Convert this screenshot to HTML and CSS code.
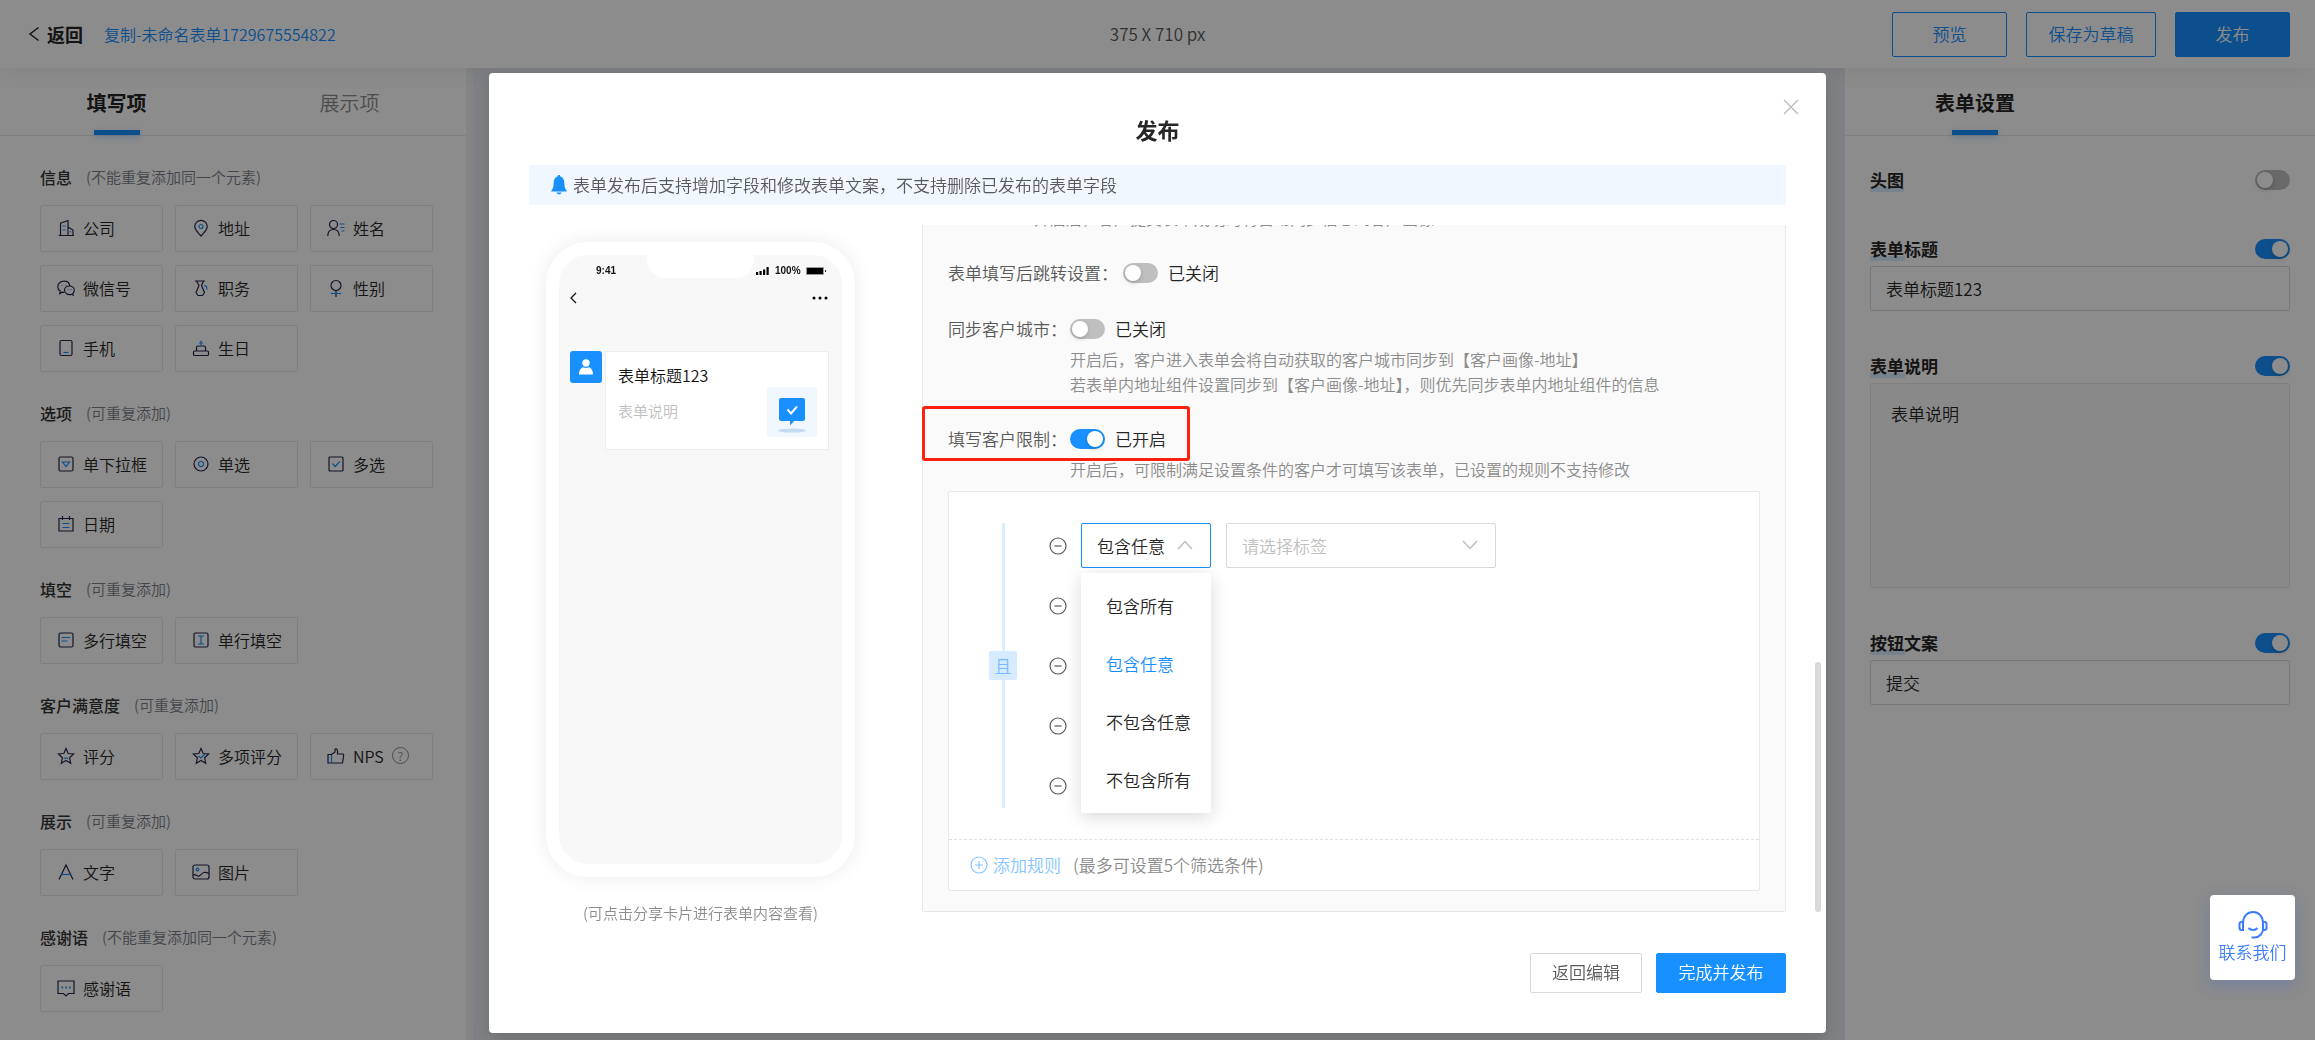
FILE: index.html
```html
<!DOCTYPE html>
<html lang="zh-CN">
<head>
<meta charset="utf-8">
<meta name="viewport" content="width=device-width, initial-scale=1">
<title>表单编辑 - 发布</title>
<link rel="stylesheet" href="styles.css">
</head>
<body>
<svg class="sprite" aria-hidden="true">
  <symbol id="i-company" viewBox="0 0 18 18"><path d="M3.5 16.5V4.2L11 1.5v15M1.5 16.5h15.500M11 8l5 3v5.500"/><path class="b" d="M5.500 7h3M5.500 11h3M13.500 12v1.500"/></symbol>
  <symbol id="i-place" viewBox="0 0 18 18"><path d="M9 17C5 13 2.800 10.500 2.800 7.500a6.200 6.200 0 0 1 12.400 0C15.200 10.500 13 13 9 17z"/><circle class="b" cx="9" cy="7.500" r="2"/></symbol>
  <symbol id="i-name" viewBox="0 0 18 18"><circle cx="6.500" cy="5.500" r="4"/><path d="M.8 17c0-4 2-6.500 5.700-6.500s5.700 2.500 5.700 6.500"/><path class="b" d="M12.500 5h5M13.500 8.500h4M14.500 12h3"/></symbol>
  <symbol id="i-wechat" viewBox="0 0 18 18"><path d="M12.800 7C12.500 4 10 2.200 7 2.200 3.600 2.200.8 4.500.8 7.700c0 1.900.9 3.400 2.400 4.400L2.700 14.600l2.700-1.400 2 .2"/><path d="M12.400 7c2.800 0 4.900 1.900 4.900 4.300 0 1.300-.6 2.400-1.500 3.200l.3 1.600-1.700-.8c-3.800.9-6.900-1.200-6.900-4C7.500 8.900 9.700 7 12.400 7z"/><path class="b" d="M4.500 6.500h1M8.500 6.500h1M10.500 10.500h1M13.500 10.500h1"/></symbol>
  <symbol id="i-job" viewBox="0 0 18 18"><path d="M3 2h10M4.500 2 7 6.500 4 13.500 6 16.500h4.500l2-3L9.500 6.500 11.500 2"/><path class="b" d="M12 6.500l2.500 1 .5 3"/></symbol>
  <symbol id="i-sex" viewBox="0 0 18 18"><circle cx="9" cy="6.500" r="5"/><path d="M9 11.500V18"/><path class="b" d="M4 14.500h10"/></symbol>
  <symbol id="i-phone" viewBox="0 0 18 18"><rect x="3" y="1.500" width="12" height="15" rx="1.500"/><path class="b" d="M6.500 13.500h5"/></symbol>
  <symbol id="i-cake" viewBox="0 0 18 18"><rect x="1.500" y="12" width="15" height="4.500" rx="1"/><path d="M4.500 12V8.500a1.500 1.500 0 0 1 1.500-1.500h6a1.500 1.500 0 0 1 1.500 1.500V12"/><path class="b" d="M9 1.500V7M7 4h4"/></symbol>
  <symbol id="i-select" viewBox="0 0 18 18"><rect x="2" y="2" width="14" height="14" rx="1.500"/><path class="b" d="M5.500 7h7L9 11.500z"/></symbol>
  <symbol id="i-radio" viewBox="0 0 18 18"><circle cx="9" cy="9" r="7"/><circle class="b" cx="9" cy="9" r="2.500"/></symbol>
  <symbol id="i-check" viewBox="0 0 18 18"><rect x="2" y="2" width="14" height="14" rx="1"/><path class="b" d="M5.500 8.500 8.300 11.500 12.800 6.500"/></symbol>
  <symbol id="i-date" viewBox="0 0 18 18"><path d="M2 3.500h14V16H2zM5.500 1v4M12.500 1v4"/><path class="b" d="M5.500 8.500h7M5.500 12.500h7"/></symbol>
  <symbol id="i-multi" viewBox="0 0 18 18"><rect x="2" y="2" width="14" height="14" rx="1.500"/><path class="b" d="M4.500 6.500h9M4.500 10h6"/></symbol>
  <symbol id="i-single" viewBox="0 0 18 18"><rect x="2" y="2" width="14" height="14" rx="1.500"/><path class="b" d="M6 5h6M9 5v8M6 13h6"/></symbol>
  <symbol id="i-star" viewBox="0 0 18 18"><path d="M9 1.500l2.200 5 5.400.5-4 3.700 1.100 5.500L9 13.500l-4.700 2.700 1.100-5.500L1.400 7l5.400-.5z"/><path class="b" d="M6.800 11.200h4.400"/></symbol>
  <symbol id="i-stars" viewBox="0 0 18 18"><path d="M9 1.500l2.200 5 5.400.5-4 3.700 1.100 5.500L9 13.500l-4.700 2.700 1.100-5.500L1.400 7l5.400-.5z"/><path class="b" d="M6.500 9l2.300 2L13.500 6.500"/></symbol>
  <symbol id="i-like" viewBox="0 0 18 18"><path d="M1 7.500h3.500L8 5V2.500C8 1.500 10.500 1.500 10.500 4v3h5.500l.7 1-1.200 8H1z"/><path class="b" d="M4.500 8v8"/></symbol>
  <symbol id="i-text" viewBox="0 0 18 18"><path d="M2 16.500 9 2l7 14.500"/><path class="b" d="M4.500 11.500h9"/></symbol>
  <symbol id="i-image" viewBox="0 0 18 18"><rect x="1" y="2" width="16" height="14" rx="2"/><path d="M1 12c3-2 4.500 3 7 .5s4-4.500 9-2"/><circle class="b" cx="5.500" cy="6.500" r="1.300"/></symbol>
  <symbol id="i-thanks" viewBox="0 0 18 18"><path d="M1 2h16v12.500h-5.500L9 17l-2.500-2.500H1z"/><path class="b w" d="M4.500 8.500h1.500M8.300 8.500h1.500M12 8.500h1.500"/></symbol>
  <symbol id="i-minus" viewBox="0 0 18 18"><circle cx="9" cy="9" r="8"/><path d="M5.500 9h7"/></symbol>
  <symbol id="i-plus" viewBox="0 0 18 18"><circle cx="9" cy="9" r="8"/><path d="M5 9h8M9 5v8"/></symbol>
</svg>

<header class="topbar">
  <button class="back" type="button">
    <svg width="12" height="16" viewBox="0 0 12 16"><path d="M10.500 1.500 2 8l8.500 6.500"/></svg>返回
  </button>
  <a class="form-name" href="#">复制-未命名表单1729675554822</a>
  <p class="size">375 X 710 px</p>
  <div class="actions">
    <button class="btn outline" type="button">预览</button>
    <button class="btn outline wide" type="button">保存为草稿</button>
    <button class="btn solid" type="button">发布</button>
  </div>
</header>

<main class="editor">
  <aside class="library">
    <nav class="tabs">
      <a class="tab active" href="#">填写项</a>
      <a class="tab" href="#">展示项</a>
    </nav>
    <div class="groups">
      <section class="group">
        <h2>信息 <small>(不能重复添加同一个元素)</small></h2>
        <div class="tiles">
          <button class="tile" type="button"><svg><use href="#i-company"/></svg>公司</button>
          <button class="tile" type="button"><svg><use href="#i-place"/></svg>地址</button>
          <button class="tile" type="button"><svg><use href="#i-name"/></svg>姓名</button>
          <button class="tile" type="button"><svg><use href="#i-wechat"/></svg>微信号</button>
          <button class="tile" type="button"><svg><use href="#i-job"/></svg>职务</button>
          <button class="tile" type="button"><svg><use href="#i-sex"/></svg>性别</button>
          <button class="tile" type="button"><svg><use href="#i-phone"/></svg>手机</button>
          <button class="tile" type="button"><svg><use href="#i-cake"/></svg>生日</button>
        </div>
      </section>
      <section class="group">
        <h2>选项 <small>(可重复添加)</small></h2>
        <div class="tiles">
          <button class="tile" type="button"><svg><use href="#i-select"/></svg>单下拉框</button>
          <button class="tile" type="button"><svg><use href="#i-radio"/></svg>单选</button>
          <button class="tile" type="button"><svg><use href="#i-check"/></svg>多选</button>
          <button class="tile" type="button"><svg><use href="#i-date"/></svg>日期</button>
        </div>
      </section>
      <section class="group">
        <h2>填空 <small>(可重复添加)</small></h2>
        <div class="tiles">
          <button class="tile" type="button"><svg><use href="#i-multi"/></svg>多行填空</button>
          <button class="tile" type="button"><svg><use href="#i-single"/></svg>单行填空</button>
        </div>
      </section>
      <section class="group">
        <h2>客户满意度 <small>(可重复添加)</small></h2>
        <div class="tiles">
          <button class="tile" type="button"><svg><use href="#i-star"/></svg>评分</button>
          <button class="tile" type="button"><svg><use href="#i-stars"/></svg>多项评分</button>
          <button class="tile" type="button"><svg><use href="#i-like"/></svg>NPS <span class="help">?</span></button>
        </div>
      </section>
      <section class="group">
        <h2>展示 <small>(可重复添加)</small></h2>
        <div class="tiles">
          <button class="tile" type="button"><svg><use href="#i-text"/></svg>文字</button>
          <button class="tile" type="button"><svg><use href="#i-image"/></svg>图片</button>
        </div>
      </section>
      <section class="group">
        <h2>感谢语 <small>(不能重复添加同一个元素)</small></h2>
        <div class="tiles">
          <button class="tile" type="button"><svg><use href="#i-thanks"/></svg>感谢语</button>
        </div>
      </section>
    </div>
  </aside>
  <div class="canvas"></div>
  <aside class="settings">
    <nav class="tabs"><a class="tab active" href="#">表单设置</a></nav>
    <form class="fields">
      <div class="field">
        <div class="field-head"><label for="s-img">头图</label><input class="switch" id="s-img" type="checkbox"></div>
      </div>
      <div class="field">
        <div class="field-head"><label for="s-title">表单标题</label><input class="switch" id="s-title" type="checkbox" checked></div>
        <input class="text" type="text" aria-label="表单标题" value="表单标题123">
      </div>
      <div class="field">
        <div class="field-head"><label for="s-desc">表单说明</label><input class="switch" id="s-desc" type="checkbox" checked></div>
        <textarea class="text area" aria-label="表单说明">表单说明</textarea>
      </div>
      <div class="field">
        <div class="field-head"><label for="s-btn">按钮文案</label><input class="switch" id="s-btn" type="checkbox" checked></div>
        <input class="text" type="text" aria-label="按钮文案" value="提交">
      </div>
    </form>
  </aside>
</main>

<div class="overlay">
  <div class="modal" role="dialog" aria-labelledby="dlg-title">
    <button class="close" type="button" aria-label="关闭">
      <svg width="16" height="16" viewBox="0 0 16 16"><path d="M1 1l14 14M15 1 1 15"/></svg>
    </button>
    <h1 id="dlg-title">发布</h1>
    <p class="notice">
      <svg width="16" height="20" viewBox="0 0 16 20"><path d="M8 0c1 0 1.400.7 1.400 1.500C12 2.200 13.200 4.500 13.300 7.500c.1 4 .7 6.500 2.400 8.300v.7H.3v-.7C2 14 2.600 11.500 2.700 7.500 2.800 4.500 4 2.200 6.600 1.500 6.600.7 7 0 8 0zM5.500 17.500h5C10 19 9 19.300 8 19.300s-2-.3-2.500-1.800z"/></svg>
      表单发布后支持增加字段和修改表单文案，不支持删除已发布的表单字段
    </p>
    <div class="modal-body">
      <div class="preview">
        <div class="phone">
          <div class="status">
            <span class="time">9:41</span>
            <span class="notch"></span>
            <span class="signal">
              <svg width="14" height="8" viewBox="0 0 14 8"><path d="M0 5h2.200v3H0zM3.500 4h2.200v4H3.500zM7 2.500h2.200V8H7zM10.500 0h2.200v8h-2.200z"/></svg>
              100%
              <svg width="20" height="8" viewBox="0 0 20 8"><path fill="#999" d="M0 1Q0 0 1 0h16q1 0 1 1v6q0 1-1 1H1Q0 8 0 7z"/><path d="M1 1h16v6H1zM19 3v2h.8V3z"/></svg>
            </span>
          </div>
          <div class="navline">
            <svg width="7" height="12" viewBox="0 0 7 12"><path d="M6 1 1 6l5 5" fill="none" stroke="#111" stroke-width="1.300"/></svg>
            <svg width="16" height="4" viewBox="0 0 16 4"><circle cx="2" cy="2" r="1.500"/><circle cx="8" cy="2" r="1.500"/><circle cx="14" cy="2" r="1.500"/></svg>
          </div>
          <div class="message">
            <span class="avatar"><svg width="14" height="16" viewBox="0 0 14 16"><circle cx="7" cy="4" r="3.700"/><path d="M0 15.500c0-4.500 2-6.500 4-7.200 2 1 4 1 6 0 2 .7 4 2.700 4 7.200z"/></svg></span>
            <div class="share">
              <p class="share-title">表单标题123</p>
              <div class="share-row">
                <p>表单说明</p>
                <svg width="50" height="50" viewBox="0 0 50 50"><path fill="#f0f7ff" d="M0 0h50v50H0z"/><ellipse cx="25" cy="43.500" rx="14" ry="2" fill="#c3dcf3"/><path fill="#1890ff" d="M14 11h22q2 0 2 2v19q0 2-2 2H27l-4 4.500V34h-9q-2 0-2-2V13q0-2 2-2z"/><path d="M20.500 22.500l3.500 4 6-7" fill="none" stroke="#fff" stroke-width="2"/></svg>
              </div>
            </div>
          </div>
        </div>
        <p class="caption">(可点击分享卡片进行表单内容查看)</p>
      </div>

      <div class="scroller">
        <div class="panel">
          <p class="hint top">开启后，客户提交表单成功时将自动同步信息到客户画像</p>
          <div class="row">
            <label for="o-jump">表单填写后跳转设置：</label><input class="switch" id="o-jump" type="checkbox"><span>已关闭</span>
          </div>
          <div class="row city">
            <label for="o-city">同步客户城市：</label><input class="switch" id="o-city" type="checkbox"><span>已关闭</span>
          </div>
          <p class="hint">开启后，客户进入表单会将自动获取的客户城市同步到【客户画像-地址】<br>若表单内地址组件设置同步到【客户画像-地址】，则优先同步表单内地址组件的信息</p>
          <div class="row limit">
            <label for="o-limit">填写客户限制：</label><input class="switch" id="o-limit" type="checkbox" checked><span>已开启</span>
          </div>
          <p class="hint">开启后，可限制满足设置条件的客户才可填写该表单，已设置的规则不支持修改</p>
          <div class="rules">
            <div class="rule-area">
              <div class="joint"><span>且</span></div>
              <div class="rule-list">
                <div class="rule">
                  <button class="minus" type="button" aria-label="删除"><svg><use href="#i-minus"/></svg></button>
                  <div class="picker open">
                    <select aria-label="条件"><option>包含任意</option><option>包含所有</option><option>不包含任意</option><option>不包含所有</option></select>
                    <svg width="16" height="10" viewBox="0 0 16 10"><path d="M1 9l7-7.500L15 9"/></svg>
                    <ul class="menu">
                      <li>包含所有</li>
                      <li class="chosen">包含任意</li>
                      <li>不包含任意</li>
                      <li>不包含所有</li>
                    </ul>
                  </div>
                  <div class="picker tag">
                    <select aria-label="标签"><option>请选择标签</option></select>
                    <svg width="16" height="10" viewBox="0 0 16 10"><path d="M1 1l7 7.500L15 1"/></svg>
                  </div>
                </div>
                <div class="rule"><button class="minus" type="button" aria-label="删除"><svg><use href="#i-minus"/></svg></button></div>
                <div class="rule"><button class="minus" type="button" aria-label="删除"><svg><use href="#i-minus"/></svg></button></div>
                <div class="rule"><button class="minus" type="button" aria-label="删除"><svg><use href="#i-minus"/></svg></button></div>
                <div class="rule"><button class="minus" type="button" aria-label="删除"><svg><use href="#i-minus"/></svg></button></div>
              </div>
            </div>
            <div class="add-row">
              <button class="add" type="button"><svg><use href="#i-plus"/></svg>添加规则</button>
              <span>(最多可设置5个筛选条件)</span>
            </div>
          </div>
        </div>
      </div>
      <div class="thumb"></div>
    </div>
    <footer class="modal-foot">
      <button class="btn plain" type="button">返回编辑</button>
      <button class="btn solid" type="button">完成并发布</button>
    </footer>
  </div>
</div>

<a class="contact" href="#">
  <svg width="30" height="30" viewBox="0 0 30 30"><path d="M5 19v-6C5 6.500 9 2 15 2s10 4.500 10 11v6c0 4.500-3.500 8-8 8.500M5 12H3.500Q1.500 12 1.500 14v4q0 2 2 2H5zM25 12h1.500q2 0 2 2v4q0 2-2 2H25zM10.500 18c2.500 2.500 6.500 2.500 9 0M13.500 27.500h4"/></svg>
  联系我们
</a>
</body>
</html>
```
FILE: styles.css
```css
:root {
  --blue: #1890ff;
  --ink: #262626;
  --text: #595959;
  --muted: #8c8c8c;
  --faint: #bfbfbf;
  --line: #e8e8e8;
}

*,
*::before,
*::after {
  box-sizing: border-box;
}

body,
h1,
h2,
p,
ul {
  margin: 0;
  padding: 0;
}

body {
  min-height: 100vh;
  display: flex;
  flex-direction: column;
  background: #fff;
  color: var(--ink);
  font-family: "Noto Sans CJK SC", "Noto Sans", sans-serif;
  font-size: 17px;
  font-weight: 350;
  line-height: 24px;
}

button,
input,
select,
textarea {
  margin: 0;
  color: inherit;
  font: inherit;
}

button {
  padding: 0;
  border: 0;
  background: none;
  white-space: nowrap;
}

a {
  color: inherit;
  text-decoration: none;
}

svg {
  flex: none;
  display: block;
}

.sprite {
  display: none;
}

symbol {
  fill: none;
  stroke: currentColor;
  stroke-width: 1.200;
}

symbol .b {
  stroke: var(--blue);
}

symbol .w {
  stroke-width: 2;
}

/* Buttons */

.btn {
  min-width: 115px;
  height: 45px;
  padding: 0 20px;
  border: 1px solid var(--blue);
  border-radius: 2px;
}

.btn.outline {
  color: var(--blue);
}

.btn.wide {
  min-width: 130px;
}

.btn.solid {
  background: var(--blue);
  color: #fff;
}

.btn.plain {
  min-width: 112px;
  border-color: #d9d9d9;
  color: var(--text);
}

/* Switch */

.switch {
  flex: none;
  appearance: none;
  display: flex;
  width: 35px;
  height: 20px;
  padding: 2px;
  border-radius: 10px;
  background: var(--faint);
}

.switch::before {
  content: "";
  width: 16px;
  height: 16px;
  border-radius: 50%;
  background: #fff;
  box-shadow: 0 2px 4px rgba(0, 35, 11, 0.2);
}

.switch:checked {
  justify-content: flex-end;
  background: var(--blue);
}

/* Top bar */

.topbar {
  position: relative;
  z-index: 1;
  display: grid;
  grid-template-columns: auto 1fr auto 1fr;
  align-items: center;
  height: 68px;
  padding: 0 25px 0 28px;
  background: #fff;
  box-shadow: 0 4px 20px rgba(0, 50, 80, 0.08);
}

.back {
  display: flex;
  align-items: center;
  gap: 7px;
  font-size: 18px;
  font-weight: 700;
}

.back svg {
  fill: none;
  stroke: currentColor;
  stroke-width: 1.500;
}

.form-name {
  margin-left: 21px;
  color: var(--blue);
  font-size: 16px;
}

.size {
  position: absolute;
  left: 0;
  right: 0;
  text-align: center;
  color: var(--text);
  pointer-events: none;
}

.actions {
  grid-column: 4;
  display: flex;
  justify-content: flex-end;
  gap: 19px;
}

/* Editor columns */

.editor {
  flex: 1;
  display: flex;
}

.library {
  width: 473px;
  border-right: 7px solid #f1f1f1;
}

.canvas {
  flex: 1;
  background: #e8eaef;
}

.settings {
  width: 470px;
}

.tabs {
  display: flex;
  height: 68px;
  border-bottom: 1px solid var(--line);
}

.tab {
  flex: 1;
  display: flex;
  flex-direction: column;
  align-items: center;
  justify-content: space-between;
  padding-top: 20px;
  color: var(--muted);
  font-size: 20px;
  line-height: 30px;
}

.settings .tab {
  flex: 0 0 260px;
}

.tab.active {
  color: var(--ink);
  font-weight: 700;
}

.tab.active::after {
  content: "";
  width: 46px;
  height: 5px;
  background: var(--blue);
  box-shadow: 0 2px 6px rgba(24, 144, 255, 0.3);
}

.groups {
  display: flex;
  flex-direction: column;
  gap: 30px;
  padding: 30px 0 20px 40px;
}

.group {
  display: flex;
  flex-direction: column;
  gap: 17px;
}

.group h2 {
  display: flex;
  gap: 14px;
  color: #333;
  font-size: 16px;
  font-weight: 500;
  line-height: 22px;
}

.group small {
  color: #7c7f8a;
  font-size: 15px;
  font-weight: 350;
}

.tiles {
  display: grid;
  grid-template-columns: repeat(3, 123px);
  gap: 13px 12px;
}

.tile {
  display: flex;
  align-items: center;
  gap: 8px;
  height: 47px;
  padding: 0 0 2px 16px;
  border: 1px solid var(--line);
  border-radius: 2px;
  font-size: 16px;
}

.tile svg {
  width: 18px;
  height: 18px;
  color: #26264a;
}

.help {
  width: 17px;
  height: 17px;
  border: 1px solid var(--muted);
  border-radius: 50%;
  color: var(--muted);
  font-size: 12px;
  line-height: 15px;
}

/* Form settings */

.fields {
  display: flex;
  flex-direction: column;
  gap: 41px;
  padding: 30px 25px;
}

.field {
  display: flex;
  flex-direction: column;
  gap: 3px;
}

.field-head {
  display: flex;
  align-items: center;
  justify-content: space-between;
  height: 28px;
}

.field-head label {
  font-weight: 700;
  background: linear-gradient(#d9eeff, #d9eeff) left bottom / 35px 5px no-repeat;
}

.text {
  width: 100%;
  height: 45px;
  padding: 0 15px;
  border: 1px solid #d9d9d9;
  border-radius: 2px;
  background: #fff;
}

.area {
  height: 205px;
  padding: 18px 20px;
  border-color: var(--line);
  background: #fafafa;
  resize: none;
}

/* Publish dialog */

.overlay {
  position: fixed;
  inset: 0;
  z-index: 2;
  padding-top: 73px;
  background: rgba(0, 0, 0, 0.45);
}

.modal {
  position: relative;
  max-width: 1337px;
  margin: 0 auto;
  padding: 40px;
  border-radius: 4px;
  background: #fff;
  box-shadow: 0 5px 15px rgba(0, 0, 0, 0.15);
}

.close {
  position: absolute;
  top: 26px;
  right: 27px;
}

.close svg {
  fill: none;
  stroke: var(--faint);
  stroke-width: 1.500;
}

.modal h1 {
  padding-bottom: 20px;
  text-align: center;
  font-size: 22px;
  font-weight: 700;
  line-height: 32px;
}

.notice {
  display: flex;
  align-items: center;
  gap: 6px;
  height: 40px;
  padding-left: 22px;
  border-radius: 2px;
  background: #f0f7ff;
  color: var(--text);
}

.notice svg {
  fill: var(--blue);
}

.modal-body {
  display: flex;
  height: calc(100vh - 353px);
  margin: 20px -35px 41px 0;
}

.modal-foot {
  display: flex;
  justify-content: flex-end;
  gap: 14px;
}

.modal-foot .btn {
  height: 40px;
  padding-bottom: 2px;
}

.modal-foot .solid {
  min-width: 130px;
}

/* Phone preview */

.preview {
  flex: 0 0 343px;
  margin-right: 50px;
  padding: 17px 17px 0;
}

.phone {
  height: 635px;
  border: 13px solid #fff;
  border-radius: 42px;
  background: #f8f8f8;
  box-shadow: 0 0 20px rgba(0, 0, 0, 0.08);
}

.status {
  display: grid;
  grid-template-columns: 1fr 107px 1fr;
  height: 32px;
  font-family: "Liberation Sans", sans-serif;
  font-size: 10px;
  font-weight: 700;
  line-height: 32px;
  color: #111;
}

.time {
  padding-left: 37px;
}

.notch {
  height: 23px;
  border-radius: 0 0 18px 18px;
  background: #fff;
}

.signal {
  display: flex;
  align-items: center;
  gap: 5px;
  padding-left: 2px;
}

.navline {
  display: flex;
  align-items: center;
  justify-content: space-between;
  padding: 5px 14px 0 11px;
}

.message {
  display: flex;
  gap: 3px;
  padding: 47px 13px 0 11px;
}

.avatar {
  display: flex;
  align-items: center;
  justify-content: center;
  width: 32px;
  height: 32px;
  border-radius: 3px;
  background: var(--blue);
}

.avatar svg {
  fill: #fff;
}

.share {
  flex: 1;
  height: 99px;
  padding: 11px 11px 0 12px;
  border: 1px solid #eee;
  background: #fff;
}

.share-title {
  color: #111;
  font-size: 16px;
}

.share-row {
  display: flex;
  justify-content: space-between;
  color: var(--faint);
  font-size: 15px;
}

.share-row p {
  padding-top: 12px;
}

.caption {
  padding-top: 24px;
  text-align: center;
  white-space: nowrap;
  color: var(--muted);
  font-size: 15px;
}

/* Publish options */

.scroller {
  flex: 1;
  display: flex;
  flex-direction: column;
  justify-content: flex-end;
  overflow: hidden;
}

.panel {
  padding: 0 25px 20px;
  border: 1px solid var(--line);
  border-top: 0;
  border-radius: 0 0 2px 2px;
  background: #fafafa;
}

.thumb {
  align-self: flex-end;
  width: 6px;
  height: 250px;
  margin: 0 0 0 29px;
  border-radius: 3px;
  background: #d9d9d9;
}

.row {
  position: relative;
  display: flex;
  align-items: center;
  height: 37px;
}

.row label {
  width: 122px;
  white-space: nowrap;
  color: var(--text);
}

.row:not(.city):not(.limit) label {
  width: 175px;
}

.row span {
  margin-left: 10px;
}

.city {
  margin-top: 19px;
}

.limit {
  margin-top: 23px;
}

.limit::after {
  content: "";
  position: absolute;
  top: -14px;
  left: -26px;
  width: 268px;
  height: 55px;
  border: 3px solid #ff2010;
  border-radius: 3px;
}

.hint {
  padding-left: 122px;
  color: var(--muted);
  font-size: 16px;
  line-height: 25px;
}

.hint.top {
  margin-bottom: 23px;
  padding-left: 86px;
}

.rules {
  margin-top: 9px;
  border: 1px solid var(--line);
  border-radius: 2px;
  background: #fff;
}

.rule-area {
  display: flex;
  gap: 32px;
  padding: 31px 40px;
}

.joint {
  display: flex;
  align-items: center;
  width: 28px;
  background: linear-gradient(#d9edff, #d9edff) center / 3px 100% no-repeat;
}

.joint span {
  width: 28px;
  border-radius: 2px;
  background: #d6ebff;
  color: #74bcff;
  text-align: center;
  line-height: 29px;
}

.rule-list {
  flex: 1;
  display: flex;
  flex-direction: column;
  gap: 15px;
}

.rule {
  display: flex;
  align-items: center;
  height: 45px;
}

.minus svg,
.add svg {
  width: 18px;
  height: 18px;
}

.minus {
  color: var(--text);
}

.picker {
  position: relative;
  width: 130px;
  height: 45px;
  margin-left: 14px;
}

.picker select {
  appearance: none;
  width: 100%;
  height: 100%;
  padding: 0 15px;
  border: 1px solid #d9d9d9;
  border-radius: 2px;
  background: #fff;
}

.picker > svg {
  position: absolute;
  top: 17px;
  right: 18px;
  fill: none;
  stroke: var(--faint);
  stroke-width: 1.500;
  pointer-events: none;
}

.picker.open select {
  border-color: var(--blue);
}

.picker.tag {
  width: 270px;
  margin-left: 15px;
  color: var(--faint);
}

.menu {
  position: absolute;
  top: 50px;
  left: 0;
  z-index: 1;
  width: 130px;
  padding: 4px 0;
  border-radius: 2px;
  background: #fff;
  box-shadow: 0 4px 18px rgba(0, 0, 0, 0.15);
  list-style: none;
}

.menu li {
  padding-left: 25px;
  line-height: 58px;
}

.menu .chosen {
  color: var(--blue);
}

.add-row {
  display: flex;
  align-items: center;
  gap: 12px;
  height: 51px;
  padding-left: 21px;
  border-top: 1px dashed #e0e0e0;
  color: var(--muted);
}

.add {
  display: flex;
  align-items: center;
  gap: 5px;
  color: #85c4ff;
}

/* Contact */

.contact {
  position: fixed;
  right: 20px;
  bottom: 60px;
  z-index: 3;
  display: flex;
  flex-direction: column;
  align-items: center;
  width: 85px;
  height: 85px;
  padding-top: 15px;
  border-radius: 4px;
  background: #fff;
  box-shadow: 0 5px 15px rgba(60, 100, 200, 0.3);
  color: #3b7cff;
  white-space: nowrap;
}

.contact svg {
  fill: none;
  stroke: currentColor;
  stroke-width: 2;
}
```
